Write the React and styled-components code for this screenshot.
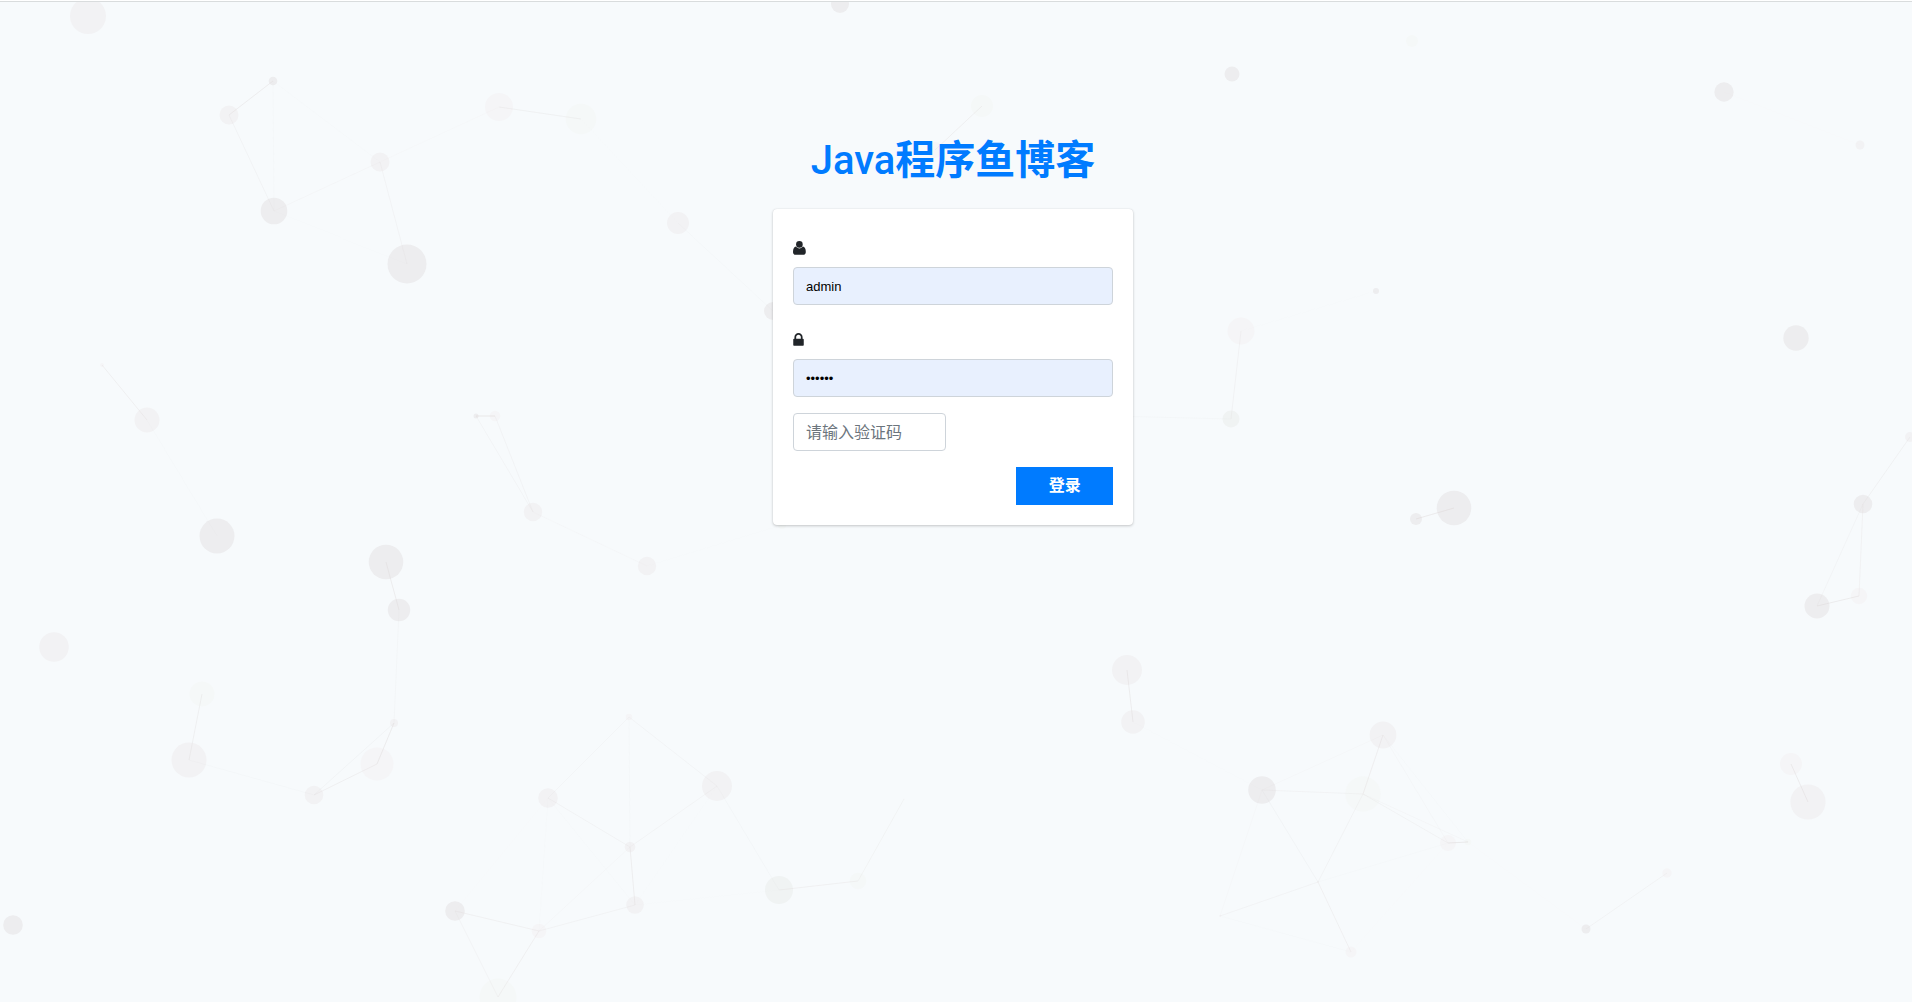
import React, { useState } from 'react';
import styled, { createGlobalStyle } from 'styled-components';

const GlobalStyle = createGlobalStyle`
  *, *::before, *::after { box-sizing: border-box; }
  body {
    margin: 0;
    background: #f7fafc;
    color: #212529;
    font-family: Roboto, "Noto Sans CJK SC", sans-serif;
    font-size: 16px;
    line-height: 24px;
  }
`;

const Page = styled.div`
  position: relative;
  min-height: 100vh;
  overflow: hidden;
  border-top: 1px solid #ffffff;
`;

const TopRule = styled.div`
  height: 1px;
  background: #d9dcdd;
`;

const Network = styled.svg`
  position: absolute;
  top: 1px;
  left: 0;
  width: 100%;
  height: 100%;
`;

const Main = styled.main`
  position: relative;
  display: flex;
  flex-direction: column;
  align-items: center;
  padding: 135px 6px 24px 0;
`;

const Title = styled.h1`
  margin: 0 0 24px;
  color: #007bff;
  font-size: 40px;
  font-weight: 500;
  line-height: 48px;
`;

const TitleStrong = styled.span`
  font-weight: 700;
`;

const Card = styled.form`
  width: 360px;
  max-width: 100%;
  padding: 20px;
  display: flex;
  flex-direction: column;
  gap: 16px;
  background: #ffffff;
  border-radius: 4px;
  box-shadow: 0 0 1px rgba(0, 0, 0, 0.13), 0 1px 3px rgba(0, 0, 0, 0.2);
`;

const Field = styled.div`
  display: flex;
  flex-direction: column;
  gap: 8px;
  padding-top: 6px;
`;

const FieldLabel = styled.label`
  display: flex;
  align-items: flex-end;
  height: 24px;
  padding-bottom: 4px;
`;

const Glyph = styled.svg`
  height: 14px;
  fill: #212529;
`;

const Input = styled.input`
  width: 100%;
  height: 38px;
  padding: 6px 12px;
  border: 1px solid #ced4da;
  border-radius: 4px;
  outline: none;
  background: ${(p) => (p.$filled ? '#e8f0fe' : '#ffffff')};
  color: #000000;
  font-family: ${(p) => (p.$filled ? '"Liberation Sans", sans-serif' : 'inherit')};
  font-size: ${(p) => (p.$filled ? '13px' : '16px')};
  &::placeholder { color: #6c757d; opacity: 1; }
`;

const Row = styled.div`
  display: grid;
  grid-template-columns: repeat(12, 1fr);
  column-gap: 15px;
`;

const Cell = styled.div`
  grid-column: ${(p) => p.$start} / span ${(p) => p.$span};
`;

const Submit = styled.button`
  width: 100%;
  height: 38px;
  padding: 0;
  border: 0;
  background: #007bff;
  color: #ffffff;
  font: inherit;
  font-weight: 700;
  cursor: pointer;
`;

const SHADES = {
  dark: '#ededef',
  mid: '#f2f2f4',
  light: '#f5f5f7',
  moss: '#f0f3f3',
  mist: '#f5f8f8',
};

// x, y, radius, shade
const NODES = [
  [88, 16, 18, 'mid'], [273, 81, 4.3, 'dark'], [229, 115, 9.5, 'mid'], [274, 211, 13.3, 'dark'],
  [380, 162, 9.5, 'mid'], [407, 264, 19.5, 'dark'], [499, 107, 14, 'light'], [581, 119, 15.3, 'mist'],
  [840, 4, 9, 'dark'], [678, 223, 11, 'mid'], [773, 311, 9, 'dark'], [982, 106, 11, 'mist'],
  [935, 150, 8, 'light'], [1412, 41, 6, 'mist'], [1232, 74, 7.5, 'dark'], [1724, 92, 9.7, 'dark'],
  [1860, 145, 4.5, 'mid'], [1376, 291, 3, 'dark'], [1241, 331, 13.5, 'light'], [1796, 338, 12.7, 'dark'],
  [1231, 419, 8.5, 'moss'], [1110, 416, 6, 'mid'], [1910, 437, 5, 'mid'], [1454, 508, 17.3, 'dark'],
  [1416, 519, 6, 'dark'], [1863, 504, 9.3, 'dark'], [1859, 596, 8.2, 'light'], [1817, 606, 12.5, 'dark'],
  [102, 365, 2, 'light'], [147, 420, 12.5, 'mid'], [217, 536, 17.5, 'dark'], [386, 562, 17.3, 'dark'],
  [399, 610, 11.2, 'dark'], [54, 647, 14.8, 'mid'], [476, 416, 2.5, 'dark'], [495, 416, 5.3, 'light'],
  [533, 512, 9.2, 'mid'], [647, 566, 9.2, 'mid'], [782, 525, 4, 'mist'], [202, 694, 12.5, 'mist'],
  [189, 760, 17.5, 'mid'], [394, 723, 4, 'mid'], [377, 764, 16.5, 'light'], [314, 795, 9.3, 'mid'],
  [13, 925, 9.8, 'dark'], [455, 911, 9.8, 'dark'], [498, 997, 18.5, 'mist'], [539, 931, 7.3, 'light'],
  [635, 905, 8.8, 'mid'], [630, 847, 5.3, 'mid'], [548, 798, 9.8, 'mid'], [629, 717, 3.3, 'light'],
  [717, 786, 15, 'mid'], [779, 890, 14, 'moss'], [858, 881, 8.3, 'mist'], [904, 799, 0.5, 'light'],
  [1127, 670, 15, 'mid'], [1133, 722, 11.8, 'mid'], [1383, 735, 13.4, 'mid'], [1262, 790, 13.8, 'dark'],
  [1363, 794, 17.7, 'mist'], [1448, 843, 8, 'light'], [1468, 842, 3.3, 'mist'], [1318, 882, 1, 'light'],
  [1220, 916, 1, 'light'], [1351, 952, 5.5, 'light'], [1586, 929, 4.5, 'dark'], [1667, 873, 4.7, 'light'],
  [1791, 764, 11, 'light'], [1808, 802, 17.6, 'mid'],
];

const LINK_DISTANCE = 150;

const LINKS = NODES.flatMap(([x1, y1], i) =>
  NODES.slice(i + 1)
    .map(([x2, y2]) => ({ x1, y1, x2, y2, d: Math.hypot(x2 - x1, y2 - y1) }))
    .filter((l) => l.d < LINK_DISTANCE)
);

function Background() {
  return (
    <Network viewBox="0 2 1912 1002" preserveAspectRatio="xMinYMin slice" aria-hidden="true">
      {NODES.map(([x, y, r, shade]) => (
        <circle key={`${x}-${y}`} cx={x} cy={y} r={r} fill={SHADES[shade]} />
      ))}
      {LINKS.map((l) => (
        <line
          key={`${l.x1}-${l.y1}-${l.x2}-${l.y2}`}
          x1={l.x1} y1={l.y1} x2={l.x2} y2={l.y2}
          stroke="#d8d2d2"
          strokeOpacity={0.5 * (1 - l.d / LINK_DISTANCE)}
        />
      ))}
    </Network>
  );
}

function UserIcon() {
  return (
    <Glyph viewBox="0 0 13 14" width="13" aria-hidden="true">
      <circle cx="6.4" cy="3.4" r="3.3" />
      <path d="M3 5.6C1 5.9 0 8 0 10.9C0 12.6 1 13.8 2.6 13.8H10.2C11.8 13.8 12.8 12.6 12.8 10.9C12.8 8 11.8 5.9 9.8 5.6C9 6.7 7.8 7.4 6.4 7.4C5 7.4 3.8 6.7 3 5.6Z" />
    </Glyph>
  );
}

function LockIcon() {
  return (
    <Glyph viewBox="320 128 1152 1536" width="11" aria-hidden="true">
      <path d="M640 768h512v-192q0-106-75-181t-181-75-181 75-75 181v192zm832 96v576q0 40-28 68t-68 28h-960q-40 0-68-28t-28-68v-576q0-40 28-68t68-28h32v-192q0-184 132-316t316-132 316 132 132 316v192h32q40 0 68 28t28 68z" />
    </Glyph>
  );
}

export default function App() {
  const [username, setUsername] = useState('admin');
  const [password, setPassword] = useState('123456');
  const [captcha, setCaptcha] = useState('');

  return (
    <Page>
      <GlobalStyle />
      <TopRule />
      <Background />
      <Main>
        <Title>Java<TitleStrong>程序鱼博客</TitleStrong></Title>
        <Card onSubmit={(e) => e.preventDefault()}>
          <Field>
            <FieldLabel htmlFor="username"><UserIcon /></FieldLabel>
            <Input $filled id="username" type="text" aria-label="用户名" value={username} onChange={(e) => setUsername(e.target.value)} />
          </Field>
          <Field>
            <FieldLabel htmlFor="password"><LockIcon /></FieldLabel>
            <Input $filled id="password" type="password" aria-label="密码" value={password} onChange={(e) => setPassword(e.target.value)} />
          </Field>
          <Row>
            <Cell $start={1} $span={6}>
              <Input type="text" aria-label="验证码" placeholder="请输入验证码" value={captcha} onChange={(e) => setCaptcha(e.target.value)} />
            </Cell>
          </Row>
          <Row>
            <Cell $start={9} $span={4}>
              <Submit type="submit">登录</Submit>
            </Cell>
          </Row>
        </Card>
      </Main>
    </Page>
  );
}
